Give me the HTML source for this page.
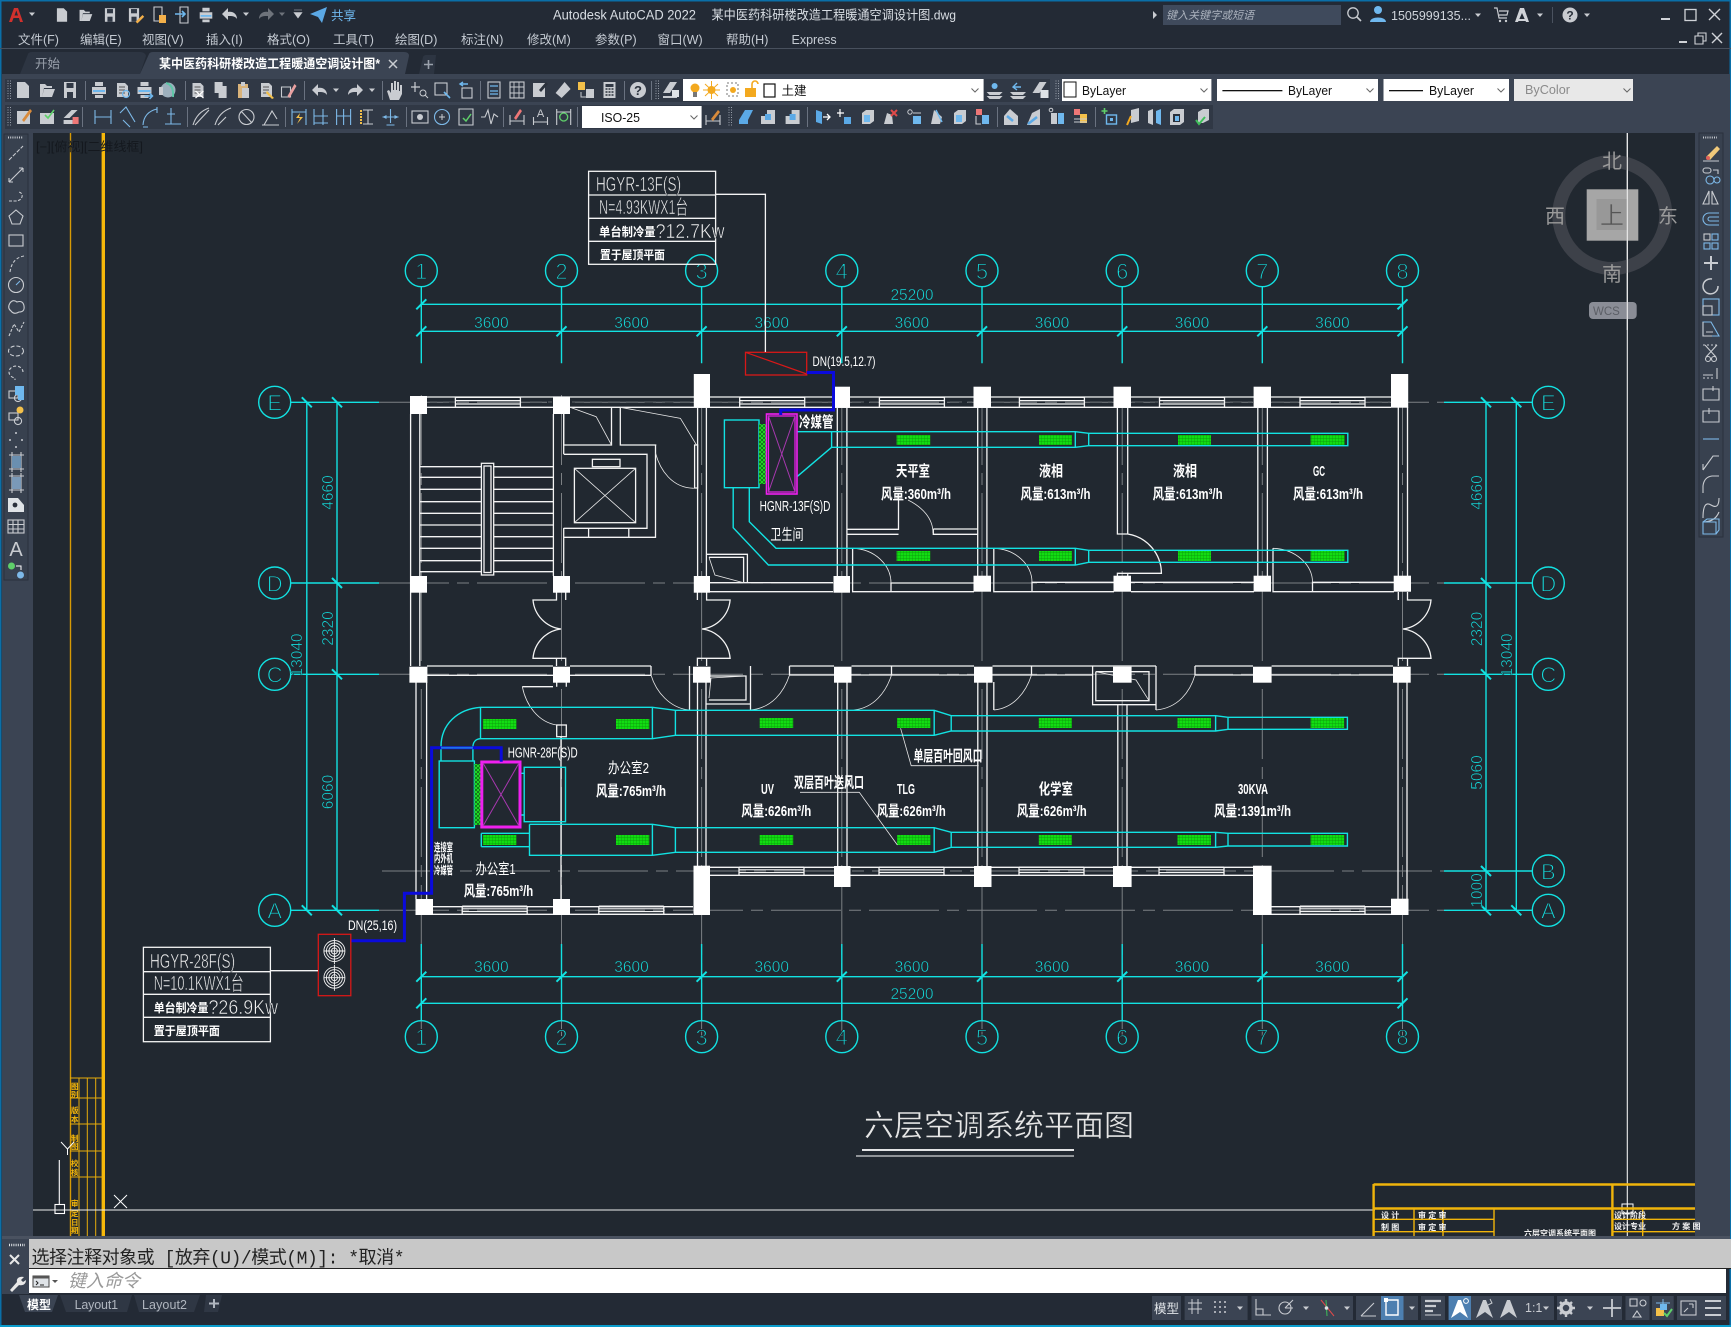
<!DOCTYPE html>
<html lang="zh"><head><meta charset="utf-8"><title>AutoCAD 2022</title>
<style>
html,body{margin:0;padding:0;background:#212830;width:1731px;height:1327px;overflow:hidden}
svg{display:block}
text{font-family:"Liberation Sans","Noto Sans CJK SC",sans-serif}
.cy{fill:none;stroke:#12e2e2;stroke-width:1.4}
.wh{fill:none;stroke:#f4f4f4;stroke-width:1.3}
.th{fill:none;stroke:#e8e8e8;stroke-width:.8}
.gr{fill:none;stroke:#7c8084;stroke-width:1}
.col{fill:#fff}
.dim{fill:#14dede;font-size:15.5px;text-anchor:middle;stroke:#212830;stroke-width:.45}
.bub{fill:#14dede;font-size:22px;text-anchor:middle;font-family:"DejaVu Sans",sans-serif;stroke:#212830;stroke-width:1}
.lab{fill:#fff;font-size:15px;font-weight:700;font-family:"Noto Serif CJK SC","Liberation Serif",serif}
.cad{fill:#f2f2f2;font-size:20px;stroke:#212830;stroke-width:.55}
.m{fill:#c5cbd3;font-size:12.5px}
.ic{fill:#c9ccd1}
.st{fill:none;stroke:#c9ccd1;stroke-width:1.1}
.sb{fill:none;stroke:#7db9e8;stroke-width:1.1}
.dk{fill:#303845}
</style></head><body>
<svg xmlns="http://www.w3.org/2000/svg" width="1731" height="1327" viewBox="0 0 1731 1327">
<defs>
<pattern id="gm" width="3" height="3" patternUnits="userSpaceOnUse"><rect width="3" height="3" fill="#12dc12"/><path d="M0 0H3M0 0V3" stroke="#0a8f0a" stroke-width=".7"/></pattern>
<pattern id="gh" width="4" height="4" patternUnits="userSpaceOnUse"><rect width="4" height="4" fill="#0b5a1a"/><path d="M0 0L4 4M4 0L0 4" stroke="#22e022" stroke-width="1"/></pattern>
<g id="win" class="wh"><path d="M0 0H65M0 3.3H65M0 6.7H65M0 10H65M0 0V10M65 0V10"/></g>
<g id="door2" class="wh"><path d="M-4.2 0V8M5 0V8H28.5A32 32 0 0 1 .5 37A32 32 0 0 1 28.5 66.3H-4.2V74M5 66.3V74"/></g>
<g id="fan" fill="none" stroke="#f2f2f2" stroke-width=".9"><circle r="10.5"/><circle r="8"/><circle r="5.5"/><circle r="3"/><path d="M0-13V13M-10.5 0H10.5"/></g>
<g id="tk"><path d="M-5 5L5-5" stroke="#12e2e2" stroke-width="2"/></g>
<g id="tb"><path d="M-5-5L5 5" stroke="#12e2e2" stroke-width="2"/></g>
<g id="new"><path class="ic" d="M-6-8H2L6-4V8H-6Z"/></g>
<g id="open"><path class="ic" d="M-7 7V-6H-2L0-4H5V-2H-3L-5 7ZM-3-1H8L5 7H-5Z"/></g>
<g id="save"><path class="ic" d="M-6-8H6V8H-6Z"/><rect class="dk" x="-3.5" y="-7" width="7" height="5"/><rect class="dk" x="-3" y="2" width="6" height="6"/></g>
<g id="print"><path class="ic" d="M-4-8H4V-4H-4ZM-7-3H7V4H-7ZM-4 5H4V8H-4Z"/><rect x="-6" y="0" width="12" height="2" fill="#6fb8ee"/></g>
<g id="undo"><path class="ic" d="M-8 0L-2-6V-2C3-3 7 0 7 5C5 2 2 2-2 2V6Z"/></g>
<g id="redo"><path class="ic" d="M8 0L2-6V-2C-3-3-7 0-7 5C-5 2-2 2 2 2V6Z"/></g>
<g id="dd"><path d="M-3-1.5H3L0 2Z" fill="#c9ccd1"/></g>
<g id="chev"><path d="M-3.5-1.5L0 2L3.5-1.5" fill="none" stroke="#666" stroke-width="1"/></g>
<g id="grip"><path d="M0-10V10M2.5-10V10" stroke="#9aa1ac" stroke-width="1" stroke-dasharray="1 1.5"/></g>
<g id="dimH"><path class="sb" d="M-8-7V7M8-7V7M-8 0H8"/></g>
<g id="doc"><path class="ic" d="M-5-7H3L6-4V7H-5Z"/><path d="M-3-3H3M-3 0H3M-3 3H3" stroke="#555" stroke-width="1"/></g>
<g id="solid"><path d="M-7 3L-1-7H7L2 3V7H-7Z" fill="#5ba9e6"/></g>
<g id="solid2"><path d="M-7-1H-1V-7H7V7H-7Z" fill="#c9ccd1"/><rect x="-3" y="-3" width="6" height="6" fill="#5ba9e6"/></g>
<g id="cube"><path d="M-6-4L-2-7H6V4L2 7H-6Z" fill="#c9ccd1"/><path d="M-4-2H2V5H-4Z" fill="#6fb8ee"/></g>
</defs>

<!-- chrome -->
<rect width="1731" height="1327" fill="#232a35"/>
<rect width="1731" height="1.5" fill="#0a6fa8"/>
<rect y="0" width="1.5" height="1327" fill="#0a6fa8"/>
<rect x="1729.5" y="0" width="1.5" height="1327" fill="#0a6fa8"/>
<rect y="1325" width="1731" height="2" fill="#0a9ccc"/>
<rect x="0" y="48" width="1731" height="1" fill="#48505d"/>
<rect x="2" y="74" width="1728" height="59" fill="#3b4453"/>
<rect x="2" y="133" width="31" height="1103" fill="#3b4453"/>
<rect x="1695" y="133" width="35" height="1103" fill="#3b4453"/>

<!-- title row -->
<path d="M9 22L14 8H18L23 22H20L19 18H13.5L12 22ZM14.5 15.5H18L16.3 10.5Z" fill="#d0312d"/>
<use href="#dd" x="32" y="14"/>
<g transform="translate(62 15) scale(.85)"><use href="#new"/></g>
<g transform="translate(85.5 15) scale(.85)"><use href="#open"/></g>
<g transform="translate(110 15) scale(.85)"><use href="#save"/></g>
<g transform="translate(134 15) scale(.85)"><use href="#save"/><path d="M2 8L10 0L12 2L4 10Z" fill="#f3b04a"/></g>
<g transform="translate(159 15)"><path class="st" d="M-5-8H3V6H-5Z"/><path d="M0 0H7V8H0Z" fill="#f3b04a"/></g>
<g transform="translate(183 15)"><path class="st" d="M-3-8H5V8H-3Z"/><path d="M-8-1H2M-1-4L2-1L-1 2" stroke="#6fb8ee" stroke-width="1.6" fill="none"/></g>
<g transform="translate(206 15) scale(.9)"><use href="#print"/></g>
<use href="#undo" x="230" y="14"/><use href="#dd" x="246" y="14"/>
<g opacity=".45"><use href="#redo" x="266" y="14"/><use href="#dd" x="282" y="14"/></g>
<path d="M294 10H302M294 12.5H302L298 18Z" fill="#c9ccd1" stroke="#c9ccd1" stroke-width=".6"/>
<path d="M310 14L327 7L322 23L318 17Z" fill="#5ba9e6"/>
<text x="331" y="20" style="fill:#6fb8ee;font-size:12.5px">共享</text>
<text x="553" y="19.5" textLength="143" lengthAdjust="spacingAndGlyphs" style="fill:#d9dee4;font-size:13.5px">Autodesk AutoCAD 2022</text>
<text x="711.5" y="19.5" textLength="244.5" lengthAdjust="spacingAndGlyphs" style="fill:#d9dee4;font-size:13px">某中医药科研楼改造工程暖通空调设计图.dwg</text>
<path d="M1153 11L1157 15L1153 19Z" fill="#c9ccd1"/>
<rect x="1163" y="5" width="178" height="20" fill="#3f4a5c"/>
<text x="1166" y="19" textLength="88" lengthAdjust="spacingAndGlyphs" style="fill:#aab1bc;font-size:11px;font-style:italic">键入关键字或短语</text>
<circle cx="1353" cy="13" r="5.2" fill="none" stroke="#c9ccd1" stroke-width="1.3"/><path d="M1357 17L1361 21" stroke="#c9ccd1" stroke-width="1.6"/>
<circle cx="1378" cy="10" r="4" fill="#6fb8ee"/><path d="M1370 22C1370 16 1386 16 1386 22Z" fill="#6fb8ee"/>
<text x="1391" y="20" textLength="80" lengthAdjust="spacingAndGlyphs" style="fill:#d0d5dc;font-size:13px">1505999135...</text>
<use href="#dd" x="1478" y="15"/>
<path d="M1494 8H1497L1499 18H1507M1499 11H1508L1507 15H1499" fill="none" stroke="#c9ccd1" stroke-width="1.2"/><circle cx="1500" cy="21" r="1.2" fill="#c9ccd1"/><circle cx="1506" cy="21" r="1.2" fill="#c9ccd1"/>
<path d="M1515 22L1520 8H1524L1529 22H1526L1522 13L1518 22Z M1516 19H1528V21H1516Z" fill="#d0d3d8"/>
<use href="#dd" x="1540" y="15"/>
<rect x="1552" y="7" width="1" height="16" fill="#4a525f"/>
<circle cx="1570" cy="15" r="7.5" fill="#c9ccd1"/><text x="1570" y="19.5" text-anchor="middle" style="fill:#2a313c;font-size:12px;font-weight:700">?</text>
<use href="#dd" x="1587" y="15"/>
<rect x="1661" y="18" width="9" height="2" fill="#d0d3d8"/>
<rect x="1685" y="9.5" width="11" height="11" fill="none" stroke="#d0d3d8" stroke-width="1.3"/>
<path d="M1709 9L1720 20M1720 9L1709 20" stroke="#d0d3d8" stroke-width="1.4"/>

<!-- menu -->
<text class="m" x="18" y="44">文件(F)</text><text class="m" x="80" y="44">编辑(E)</text><text class="m" x="142" y="44">视图(V)</text><text class="m" x="206" y="44">插入(I)</text><text class="m" x="267" y="44">格式(O)</text><text class="m" x="333" y="44">工具(T)</text><text class="m" x="395" y="44">绘图(D)</text><text class="m" x="461" y="44">标注(N)</text><text class="m" x="527" y="44">修改(M)</text><text class="m" x="595" y="44">参数(P)</text><text class="m" x="657.5" y="44">窗口(W)</text><text class="m" x="726" y="44">帮助(H)</text><text class="m" x="791.5" y="44">Express</text>
<rect x="1679" y="41" width="8" height="2" fill="#d0d3d8"/>
<path d="M1695 36H1703V44H1695ZM1698 36V33H1706V41H1703" fill="none" stroke="#d0d3d8" stroke-width="1.1"/>
<path d="M1712 33L1722 43M1722 33L1712 43" stroke="#d0d3d8" stroke-width="1.4"/>

<!-- tabs -->
<path d="M20 74L28 54Q29 52 32 52H140Q145 52 146 56L140 74Z" fill="#2d3542"/>
<text x="35" y="68" style="fill:#9aa1ac;font-size:12.5px">开始</text>
<path d="M140 74L149 54Q150 52 153 52H404Q409 52 409 56L405 74Z" fill="#3b4453"/>
<text x="159" y="68" textLength="221" lengthAdjust="spacingAndGlyphs" style="fill:#fff;font-size:12.5px;font-weight:700">某中医药科研楼改造工程暖通空调设计图*</text>
<path d="M389 60L397 68M397 60L389 68" stroke="#c9ccd1" stroke-width="1.5"/>
<path d="M419 74L423 57Q424 55 426 55H436L434 74Z" fill="#2d3542"/>
<path d="M424 64.5H433M428.5 60V69" stroke="#9aa1ac" stroke-width="1.6"/>

<!-- toolbars bg -->
<rect x="5" y="79" width="1045" height="23" fill="#303845"/>
<rect x="5" y="105" width="1208" height="24" fill="#303845"/>
<use href="#grip" x="8" y="90.5"/><use href="#grip" x="8" y="117"/>
<!-- row 1 -->
<use href="#new" x="23" y="90"/><use href="#open" x="47" y="90"/><use href="#save" x="70" y="90"/>
<rect x="85" y="81" width="1" height="19" fill="#6a7280"/>
<use href="#print" x="99" y="90"/>
<g transform="translate(122 90)"><use href="#doc"/><circle cx="4" cy="4" r="3.5" fill="none" stroke="#6fb8ee" stroke-width="1.2"/></g>
<g transform="translate(144.5 90)"><use href="#print"/><path d="M0 6H8M5 3L8 6L5 9" stroke="#6fb8ee" stroke-width="1.5" fill="none"/></g>
<g transform="translate(168 90)"><circle r="7.5" fill="#9db0bd"/><path d="M-2-7Q6-5 5 7" stroke="#5fc7a8" stroke-width="2" fill="none"/><rect x="-9" y="-3" width="4" height="8" fill="#c9ccd1"/></g>
<rect x="185" y="81" width="1" height="19" fill="#6a7280"/>
<g transform="translate(197.5 90)"><use href="#doc"/><path d="M-2 1L6 8M6 1L-2 8" stroke="#fff" stroke-width="1.2"/></g>
<g transform="translate(220.6 90)"><path class="ic" d="M-6-8H2V3H-6ZM-2-4H6V8H-2Z"/></g>
<g transform="translate(243 90)"><path d="M-5-6H5V8H-5Z" fill="#d9b37a"/><rect x="-2" y="-8" width="4" height="4" fill="#c9ccd1"/><path class="ic" d="M-1-2H6V8H-1Z"/></g>
<g transform="translate(266 90)"><use href="#doc"/><path d="M1 1L8 8L6 9L0 3Z" fill="#f3c04a"/></g>
<g transform="translate(288.5 90)"><path class="st" d="M-7-3H2V7H-7Z"/><path d="M-1 6L6-6L8-4L1 8Z" fill="#e9a0a0"/></g>
<rect x="304" y="81" width="1" height="19" fill="#6a7280"/>
<use href="#undo" x="320" y="90"/><use href="#dd" x="336" y="90"/><use href="#redo" x="355" y="90"/><use href="#dd" x="372" y="90"/>
<rect x="382" y="81" width="1" height="19" fill="#6a7280"/>
<path class="ic" d="M390 100L387 91L389 90L391 93V83H393V90H394V81H396V90H397V82H399V91H400V85H402V94L399 100Z"/>
<g transform="translate(419 90)"><path d="M-4-8V2M-8-3H1" stroke="#c9ccd1" stroke-width="1.2"/><circle cx="4" cy="3" r="3" fill="none" stroke="#c9ccd1"/><path d="M6 5L9 8" stroke="#c9ccd1"/></g>
<g transform="translate(442 90)"><rect class="st" x="-7" y="-7" width="12" height="12"/><path d="M2 2L8 8" stroke="#6fb8ee" stroke-width="1.6"/></g>
<g transform="translate(466 90)"><rect class="st" x="-4" y="-2" width="10" height="10"/><path d="M-6-6H2M-3-8L-6-6L-3-4" stroke="#6fb8ee" stroke-width="1.4" fill="none"/></g>
<rect x="480" y="81" width="1" height="19" fill="#6a7280"/>
<g transform="translate(494 90)"><rect class="st" x="-6" y="-8" width="12" height="16"/><path d="M-4-4H4M-4 1H4M-4 4H4" stroke="#6fb8ee" stroke-width="1.3"/></g>
<g transform="translate(517 90)"><rect class="st" x="-7" y="-8" width="14" height="16"/><path d="M-3-8V8M2-8V8M-7-3H7M-7 3H7" stroke="#c9ccd1" stroke-width=".9"/></g>
<g transform="translate(540 90)"><path class="ic" d="M-7-7H5V7H-7Z"/><path d="M-1 0L6-8L8-6L1 2Z" fill="#2a313c"/></g>
<g transform="translate(562.6 90)"><path class="ic" d="M-7 3L2-8L8-1L-1 8Z"/></g>
<g transform="translate(586 90)"><rect x="-8" y="-8" width="7" height="8" fill="#f3c04a"/><path class="ic" d="M0-1H8V8H0Z"/><path d="M-5 2V7H0" stroke="#c9ccd1" fill="none"/></g>
<g transform="translate(609.5 90)"><rect class="ic" x="-6" y="-8" width="12" height="16"/><rect class="dk" x="-4" y="-6" width="8" height="3"/><path d="M-4-1H4M-4 2H4M-4 5H4" stroke="#2a313c" stroke-width="1.4" stroke-dasharray="2 1"/></g>
<rect x="624" y="81" width="1" height="19" fill="#6a7280"/>
<circle cx="638" cy="90" r="8" fill="#c9ccd1"/><text x="638" y="95" text-anchor="middle" style="fill:#2a313c;font-size:13px;font-weight:700">?</text>
<rect x="651" y="81" width="1" height="19" fill="#6a7280"/><use href="#grip" x="656" y="90.5"/>
<g transform="translate(671 90)"><path class="ic" d="M-8 3L-1-8H6L-1 3ZM-8 6H6V8H-8Z"/><rect x="1" y="0" width="7" height="7" fill="#dfe3e7"/></g>
<rect x="683" y="79" width="300.6" height="22" fill="#fff"/>
<circle cx="695" cy="88" r="4.5" fill="#f3a91f"/><rect x="693" y="92" width="4" height="5" fill="#777"/>
<circle cx="711.5" cy="90" r="4" fill="#f3a91f"/><path d="M711.5 81V99M703 90H720M705 84L718 96M718 84L705 96" stroke="#f3a91f" stroke-width="1"/>
<rect x="727" y="83" width="11" height="13" fill="none" stroke="#777" stroke-dasharray="2 2"/><circle cx="733" cy="90" r="3" fill="#f3a91f"/>
<rect x="745" y="88" width="11" height="9" fill="#f3a91f"/><path d="M752 88V84A3 3 0 0 1 758 84" fill="none" stroke="#f3a91f" stroke-width="1.6"/>
<rect x="764" y="84" width="11" height="13" fill="#fff" stroke="#111" stroke-width="1.2"/>
<text x="781.5" y="95" style="fill:#111;font-size:12.5px">土建</text>
<use href="#chev" x="975" y="90"/>
<g transform="translate(994.6 90)"><circle cy="-4" r="3" fill="#6fb8ee"/><path d="M-8 2H8L5 5H-5ZM-8 6H8L5 9H-5Z" fill="#c9ccd1"/></g>
<g transform="translate(1018 90)"><path d="M-8 2H8L5 5H-5ZM-8 6H8L5 9H-5Z" fill="#c9ccd1"/><path d="M-4-3H3M-1-7L-5-3L-1 0" stroke="#6fb8ee" stroke-width="1.4" fill="none"/></g>
<g transform="translate(1040.5 90)"><path class="ic" d="M-8 3L-1-8H6L-1 3Z"/><rect x="0" y="0" width="8" height="8" fill="#dfe3e7"/></g>
<use href="#grip" x="1056" y="90.5"/>
<rect x="1062" y="79" width="149.4" height="22" fill="#fff"/><rect x="1064" y="82" width="12" height="15" fill="#fff" stroke="#111"/>
<text x="1082" y="95" textLength="44" lengthAdjust="spacingAndGlyphs" style="fill:#111;font-size:12.5px">ByLayer</text><use href="#chev" x="1204" y="90"/>
<rect x="1217" y="79" width="161" height="22" fill="#fff"/><rect x="1222.4" y="90" width="60" height="1.3" fill="#111"/>
<text x="1288" y="95" textLength="44" lengthAdjust="spacingAndGlyphs" style="fill:#111;font-size:12.5px">ByLayer</text><use href="#chev" x="1370" y="90"/>
<rect x="1383.5" y="79" width="125.5" height="22" fill="#fff"/><rect x="1389" y="90" width="34" height="1.3" fill="#111"/>
<text x="1429" y="95" textLength="45" lengthAdjust="spacingAndGlyphs" style="fill:#111;font-size:12.5px">ByLayer</text><use href="#chev" x="1501" y="90"/>
<rect x="1514" y="79" width="119" height="22" fill="#e8e8e8"/>
<text x="1525" y="94" textLength="45" lengthAdjust="spacingAndGlyphs" style="fill:#8a8a8a;font-size:12.5px">ByColor</text><use href="#chev" x="1627" y="90"/>
<!-- row 2 -->
<g transform="translate(24 117)"><path class="ic" d="M-7-6H6V7H-7Z"/><path d="M-2 3L6-8L8-6L0 5Z" fill="#d98a3a"/></g>
<g transform="translate(47 117)"><path class="ic" d="M-7-4H7V7H-7Z"/><path d="M-2-2L1 1L7-7" stroke="#5fd06a" stroke-width="1.6" fill="none"/></g>
<g transform="translate(70.6 117)"><path class="ic" d="M-7 1L1-7H7L-1 1Z"/><path d="M-7 3H2V7H-7Z" fill="#c9ccd1"/><rect x="2" y="0" width="6" height="7" fill="#e77"/></g>
<rect x="82" y="107" width="1" height="20" fill="#6a7280"/>
<use href="#dimH" x="103" y="117"/>
<path class="sb" d="M120 113L126 107L135 122M123 120L130 127"/>
<path class="sb" d="M143 125Q144 112 157 109M143 127H148M157 107V113"/>
<path class="sb" d="M165 124H181M171 124V108M167 114H175"/>
<rect x="187" y="107" width="1" height="20" fill="#6a7280"/>
<path class="st" d="M193 125Q197 112 209 108M195 125L209 110"/>
<path class="st" d="M215 125Q219 112 231 108M218 125L226 117"/>
<circle class="st" cx="246.5" cy="117" r="7.5"/><path class="st" d="M241 111L252 123"/>
<path class="st" d="M262 125H279M264 125L272 111L277 119"/>
<rect x="285" y="107" width="1" height="20" fill="#6a7280"/>
<g transform="translate(299 117)"><path class="sb" d="M-7-8V8M7-8V8M-7-5H7"/><path d="M1-4L-3 1H1L-2 7L4 0H0Z" fill="#f3c04a"/></g>
<g transform="translate(321 117)"><path class="sb" d="M-7-8V8M-7-1H7M-7 6H7M2-8V8"/></g>
<g transform="translate(343.6 117)"><path class="sb" d="M-7-8V8M0-8V8M7-8V8M-7-1H7"/></g>
<g transform="translate(368 117)"><path class="st" d="M-5-7H5M-5 7H5M0-7V7"/><path d="M-7-7V7" stroke="#f3c04a" stroke-width="2" stroke-dasharray="2 1"/></g>
<g transform="translate(390.5 117)"><path class="sb" d="M-8 0H8M0-8V6M-4 8H4"/><path d="M-8 0L-4-2V2Z M8 0L4-2V2Z" fill="#7db9e8"/></g>
<rect x="406" y="107" width="1" height="20" fill="#6a7280"/>
<g transform="translate(420 117)"><rect class="st" x="-8" y="-6" width="16" height="12"/><circle r="3" fill="#c9ccd1"/></g>
<g transform="translate(442 117)"><circle class="sb" r="7.5"/><path d="M-3 0H3M0-3V3" stroke="#c9ccd1"/></g>
<g transform="translate(466 117)"><path class="st" d="M-7-8H7V8H-7Z"/><path d="M-3 1L0 4L5-3" stroke="#5fd06a" stroke-width="1.5" fill="none"/></g>
<path class="st" d="M481 117H485L488 110L491 124L494 114L498 117"/>
<rect x="503" y="107" width="1" height="20" fill="#6a7280"/>
<g transform="translate(517 117)"><path class="st" d="M-7-2V8M7-2V8M-7 4H7"/><path d="M-3 1L3-8L5-6L-1 3Z" fill="#e77"/></g>
<g transform="translate(540.5 117)"><path class="st" d="M-7 8V0M7 8V0M-7 5H7"/><text y="0" text-anchor="middle" style="fill:#c9ccd1;font-size:11px">A</text></g>
<g transform="translate(563.7 117)"><path class="st" d="M-7-8V8M7-8V8M-7-5H7"/><circle r="4" fill="none" stroke="#5fd06a" stroke-width="1.3"/></g>
<rect x="577" y="107" width="1" height="20" fill="#6a7280"/>
<rect x="582" y="106" width="119.6" height="22" fill="#fff"/>
<text x="601" y="122" textLength="39" lengthAdjust="spacingAndGlyphs" style="fill:#111;font-size:13px">ISO-25</text><use href="#chev" x="694" y="117"/>
<g transform="translate(713 117)"><path class="st" d="M-7-2V8M7-2V8M-7 4H7"/><path d="M-2 2L5-7L7-5L0 4Z" fill="#d98a3a"/></g>
<use href="#grip" x="729" y="117"/>
<use href="#solid" x="746" y="117"/><use href="#solid2" x="768" y="117"/><use href="#solid2" x="792.6" y="117"/>
<rect x="807" y="107" width="1" height="20" fill="#6a7280"/>
<g transform="translate(822 117)"><path d="M-6-7L0-5V7L-6 5Z" fill="#5ba9e6"/><path d="M1 0H8M5-3L8 0L5 3" stroke="#fff" stroke-width="1.3" fill="none"/></g>
<g transform="translate(844 117)"><path d="M-7-4H0M-4-8V0" stroke="#fff" stroke-width="1.2"/><rect x="0" y="0" width="7" height="7" fill="#5ba9e6"/></g>
<use href="#cube" x="868" y="117"/>
<g transform="translate(890 117)"><path class="ic" d="M-6 7L-3-4L2-2L3 7Z"/><path d="M1-7L7-1M7-7L1-1" stroke="#e04a4a" stroke-width="2"/></g>
<g transform="translate(915 117)"><circle cx="-5" cy="-5" r="2.2" fill="none" stroke="#c9ccd1"/><rect x="-2" y="-1" width="8" height="8" fill="#6fb8ee"/><path d="M-2-4H6" stroke="#c9ccd1"/></g>
<g transform="translate(937 117)"><path class="ic" d="M-6 7L-3-7L5 0L3 7Z"/><path d="M-1-7L5 5" stroke="#6fb8ee" stroke-width="1.5"/></g>
<use href="#cube" x="960" y="117"/>
<g transform="translate(982 117)"><rect x="-6" y="-8" width="6" height="6" fill="#e77"/><rect x="0" y="-2" width="7" height="9" fill="#6fb8ee"/><path class="st" d="M-6-1V7H-1"/></g>
<rect x="997" y="107" width="1" height="20" fill="#6a7280"/>
<g transform="translate(1011 117)"><path class="ic" d="M-7 8V-1L-1-8L7-1V8Z"/><path d="M-4-1L2 4" stroke="#5ba9e6" stroke-width="2.5"/></g>
<g transform="translate(1034 117)"><path class="ic" d="M-7 8L-2-4L6-8V8Z"/><path d="M-6 7L3 0" stroke="#5ba9e6" stroke-width="2.5"/></g>
<g transform="translate(1057 117)"><rect class="ic" x="-6" y="-4" width="6" height="11"/><rect x="1" y="-4" width="6" height="11" fill="#6fb8ee"/><circle cx="-6" cy="-7" r="1.8" fill="none" stroke="#c9ccd1"/></g>
<g transform="translate(1080 117)"><rect x="-6" y="-8" width="6" height="6" fill="#e77"/><rect x="0" y="-3" width="7" height="9" fill="#f3c04a"/><path d="M-6 2H7M-6 5H7" stroke="#c9ccd1"/></g>
<rect x="1095" y="107" width="1" height="20" fill="#6a7280"/>
<g transform="translate(1109.5 117)"><path d="M-8-6H-2M-5-9V-3" stroke="#5fd06a" stroke-width="1.6"/><rect x="-3" y="-2" width="10" height="9" fill="none" stroke="#6fb8ee" stroke-width="1.4"/><rect x=".5" y="1" width="3" height="3" fill="#6fb8ee"/></g>
<g transform="translate(1133 117)"><path class="ic" d="M-2-7L6-9V4L-2 6Z"/><path d="M-6 8L-2-1" stroke="#f3a91f" stroke-width="2"/></g>
<g transform="translate(1155 117)"><path class="ic" d="M-7-6L-2-8V8L-7 6Z"/><path d="M1-6L6-8V8L1 6Z" fill="#6fb8ee"/></g>
<g transform="translate(1177 117)"><path class="ic" d="M-7-5L-3-8H7V5L3 8H-7Z"/><rect x="-4" y="-3" width="7" height="8" fill="#2a313c"/><rect x="-2" y="-1" width="4" height="5" fill="#6fb8ee"/></g>
<g transform="translate(1202 117)"><path class="ic" d="M-4-5L1-8H7V3L1 6H-4Z"/><path d="M-6 3L-3 7L3 0" stroke="#3fbf5a" stroke-width="2" fill="none"/></g>

<!-- canvas -->
<rect x="33" y="133" width="1662" height="1103" fill="#212830"/>

<!-- yellow left border -->
<path d="M70.5 133V1236" stroke="#d69a05" stroke-width="1.4"/>
<path d="M103.3 133V1236" stroke="#f6b80a" stroke-width="3.4"/>
<path d="M70 1078H103M70 1098H103M70 1124H103M70 1151H103M70 1177H103M70 1210H103M79 1078V1236M87.3 1078V1236M95.7 1078V1236" stroke="#e8ac0a" stroke-width="1"/>
<g style="fill:#f6b80a;font-size:7.5px;font-weight:700" font-family="Noto Sans CJK SC">
<text x="71" y="1089">图</text><text x="71" y="1097">别</text><text x="71" y="1113">版</text><text x="71" y="1122">本</text><text x="71" y="1141">制</text><text x="71" y="1149">图</text><text x="71" y="1166">校</text><text x="71" y="1175">核</text><text x="71" y="1206">审</text><text x="71" y="1216">定</text><text x="71" y="1225">日</text><text x="71" y="1233">期</text></g>
<text x="36" y="151" textLength="107" lengthAdjust="spacingAndGlyphs" style="fill:#14181e;font-size:12.5px">[−][俯视][二维线框]</text>

<!-- gray axis lines -->
<g class="gr">
<path stroke-dasharray="70 8 12 8" d="M421.3 395V1036M561.5 395V1036M701.6 395V1036M841.8 395V1036M982 395V1036M1122.2 395V1036M1262.3 395V1036M1402.5 395V1036"/>
<path stroke-dasharray="70 8 12 8" d="M379 402.3H1444M379 583H1444M379 674.3H1444M382 871H1444M379 910.3H1444"/>
</g>

<!-- crosshair + UCS -->
<path d="M1627.3 133V1236M33 1210H1375" stroke="#f0f0f0" stroke-width="1.1" fill="none"/>
<rect x="1622" y="1204" width="11" height="9" fill="none" stroke="#fff"/>
<path d="M59.3 1160V1204" stroke="#fff" stroke-width="1.1"/><rect x="55" y="1204.5" width="9.5" height="9" fill="none" stroke="#fff" stroke-width="1.1"/>
<path d="M61 1142L67.5 1149L74 1142M67.5 1149V1155M114 1195L127 1208M127 1195L114 1208" stroke="#fff" stroke-width="1" fill="none"/>

<!-- WALLS -->
<g class="wh">
<path d="M410 397H1391M427 407.3H1391"/>
<path d="M410.6 414V666M419.8 414V666M553.4 414V576M563.7 414V454M563.7 528V576M697.6 407V576M706.4 407V576M837.3 407V576M846.9 407V576M977.7 407V576M986.9 407V576M1117.4 407V534H1127.7A40 40 0 0 1 1161.4 573.3H1117.4V576M1127.7 407V534M1127.7 573V576M1257.8 407V576M1267.4 407V576M1398.3 407V576M1407.5 407V576"/>
<!-- stair room -->
<path d="M419.8 466.7H553M419.8 477.3H553M419.8 489.3H553M419.8 501.7H553M419.8 513.3H553M419.8 525H553M419.8 536.7H553M419.8 548.3H553M419.8 560.7H553M419.8 571.7H553"/>
<rect x="481.4" y="463.3" width="12.3" height="111.7" fill="#212830"/><rect x="484" y="466" width="7" height="106.5"/>
<!-- small rooms -->
<path d="M563.7 407V445H611.5V407.3M620.3 407.3V445H656.3M655.5 445V537.3H563.7M563.7 454.3H647V528.3H563.7M588.6 528V537.3M628.8 528V537.3"/>
<rect x="592.4" y="459.3" width="27.6" height="7.4"/><rect x="574.4" y="468.3" width="61.2" height="54.4"/>
<path class="th" d="M574.4 468.3L635.6 522.7M635.6 468.3L574.4 522.7M570 407.3L596.2 416.7L611.5 445M620.3 407.3L680.4 418.3L696.5 445M655.5 453C660 470 672 488 693.8 488.3"/>
<path d="M694.6 445H697.6V488H694.6Z"/>
<!-- D row -->
<path d="M706.4 582.7H833M706.4 591.7H833M852.6 548.3V591.7H891V583H974M891 591.7H974M993.8 548.3V591.7H1032V582.3H1114M1032 591.7H1114M1131 582.3H1254M1131 591.7H1254M1273 548.3V591.7H1312.5V582.3H1394M1312.5 591.7H1394"/>
<path class="th" d="M852.6 548.3C875 549 891 565 891 583M993.8 548.3C1016 549 1032 565 1032 582.3M1273 548.3C1296 549 1312.5 565 1312.5 582.3M908 500C922 507 933 518 933 533"/>
<path d="M706.4 554.3H747.4V582.7M709 557.3H743.6V582.7"/>
<path class="th" d="M709 557.3L714.9 575L743.6 582.7"/>
<path d="M846.9 529.3H898.5V500M846.9 534.3H898.5M933.3 529V534.3H977.7M933.3 529H977.7"/>
<!-- C row -->
<path d="M427 666H553M419 675.3H553M570 666H651M570 675.3H651M651 666V675M689.5 666V710M750.5 666V710M709 676H746V700H709M706 704H750.5M789.5 666V675M789.5 666H834M789.5 675H834M851.5 666H891.5M851.5 675H891.5M891.5 666V675M891.5 666H974M891.5 675H974M992.5 666H1031.5M992.5 675H1031.5M1031.5 666V675M1031.5 666H1092.6M1031.5 675H1092.6M1092.6 666V704.7H1156M1156 666V710M1092.6 666H1156M1095.8 671.7H1149V700.7H1095.8V671.7M1195 666V675M1195 666H1253M1195 675H1253M1271.6 666H1393M1271.6 675H1393"/>
<path class="th" d="M651 675C656 692 670 708 689 710M789.5 675C784 692 772 708 750.5 710M891.5 675C886 692 874 708 853.8 710M1031.5 675C1026 692 1014 708 993.8 710M1195 675C1190 692 1178 708 1156 710M1095.8 671.7L1136 680L1149 700.7M711 678L709 698M711 678L746 676"/>
<path d="M993.8 682V710"/>
<!-- lower verticals -->
<path d="M416 682V899M426.6 682V899M561 737V899M697.5 682V866M706 682V866M837.7 682V866M847 682V866M977.8 682V866M987 682V866M1117.8 704.7V866M1127 704.7V866M1398 682V899M1407 682V899"/>
<path d="M522.3 686.7H553M556.7 675V686.7M566.3 675V686.7"/>
<path class="th" d="M522.3 686.7C526 705 538 722 556.7 725"/>
<rect x="556.7" y="725" width="9.6" height="11.7"/>
<!-- bottom walls -->
<path d="M433 906.7H553M433 914.3H553M570 906.7H693M570 914.3H693M710 867.3H1254M710 875.3H1254M1271 906.7H1393M1271 914.3H1393"/>
</g>
<use href="#door2" x="701.6" y="592"/>
<use href="#door2" transform="translate(561.5 592) scale(-1 1)"/>
<use href="#door2" x="1402.5" y="592"/>
<!-- dashes in wall -->
<path d="M455 402H430M530 402H552M572 402H690M710 402H738M810 402H832M852 402H878M950 402H972M992 402H1018M1090 402H1112M1132 402H1158M1230 402H1252M1272 402H1298M1370 402H1390" stroke="#5e6368" stroke-width="1" stroke-dasharray="12 6" fill="none"/>
<!-- windows -->
<g>
<use href="#win" x="455.4" y="397.3"/><use href="#win" x="739.7" y="397.3"/><use href="#win" x="879.4" y="397.3"/><use href="#win" x="1019.4" y="397.3"/><use href="#win" x="1159.5" y="397.3"/><use href="#win" x="1300" y="397.3"/>
<use href="#win" transform="translate(462.2 906) scale(1 .83)"/><use href="#win" transform="translate(598.8 906) scale(1 .83)"/><use href="#win" transform="translate(739 867) scale(1 .83)"/><use href="#win" transform="translate(879 867) scale(1 .83)"/><use href="#win" transform="translate(1019 867) scale(1 .83)"/><use href="#win" transform="translate(1159 867) scale(1 .83)"/><use href="#win" transform="translate(1300 906) scale(1 .83)"/>
</g>
<!-- columns -->
<g class="col">
<rect x="410" y="396" width="17" height="18"/><rect x="553" y="396.5" width="17" height="17.5"/><rect x="693.8" y="374" width="16.2" height="33"/><rect x="833.5" y="386.7" width="16.5" height="20.6"/><rect x="973.5" y="386.7" width="17.5" height="21"/><rect x="1113.5" y="386.7" width="17.5" height="21"/><rect x="1253.6" y="386.7" width="17.4" height="21"/><rect x="1391" y="374" width="17.2" height="33.7"/>
<rect x="410" y="576" width="17" height="16.7"/><rect x="553" y="576" width="17" height="16.7"/><rect x="693.8" y="576" width="16.2" height="16.7"/><rect x="833.5" y="576" width="16.5" height="16.7"/><rect x="973.5" y="575.7" width="17.5" height="16"/><rect x="1113.5" y="575.7" width="17.5" height="16"/><rect x="1253.6" y="575.7" width="17.4" height="16"/><rect x="1393.7" y="575.7" width="17.3" height="16"/>
<rect x="409.4" y="666.7" width="18" height="16"/><rect x="553" y="666.7" width="17" height="16"/><rect x="693" y="666.7" width="17.5" height="16"/><rect x="834" y="666.7" width="17.5" height="16"/><rect x="974" y="666.7" width="18.5" height="16"/><rect x="1113" y="666.7" width="18.6" height="16"/><rect x="1253" y="666.7" width="18.6" height="16"/><rect x="1393" y="666.7" width="17.7" height="16"/>
<rect x="415.5" y="899" width="17.5" height="16"/><rect x="553" y="899" width="17" height="16"/><rect x="693.5" y="865.7" width="16.5" height="49.3"/><rect x="834" y="866" width="16.5" height="21"/><rect x="974" y="866" width="17.5" height="21"/><rect x="1113" y="866" width="18.6" height="21"/><rect x="1253" y="865.7" width="18.6" height="49.3"/><rect x="1391" y="898.7" width="17.5" height="16.3"/>
</g>

<!-- DIMENSIONS -->
<g class="cy">
<path d="M421.3 287V363.3M561.5 287V363.3M701.6 287V363.3M841.8 287V363.3M982 287V363.3M1122.2 287V363.3M1262.3 287V363.3M1402.5 287V363.3"/>
<path d="M421.3 304.3H1402.5M421.3 331.3H1402.5"/>
<path d="M421.3 944V1020M561.5 944V1020M701.6 944V1020M841.8 944V1020M982 944V1020M1122.2 944V1020M1262.3 944V1020M1402.5 944V1020"/>
<path d="M421.3 976.7H1402.5M421.3 1003.3H1402.5"/>
<path d="M290 402.3H379M290 583H379M290 674.3H379M290 910.3H379M306.8 402.3V910.3M337 402.3V910.3"/>
<path d="M1444 402.3H1532M1444 583H1532M1444 674.3H1532M1444 871H1532M1444 910.3H1532M1486 402.3V910.3M1516.3 402.3V910.3"/>
<circle cx="421.3" cy="270.7" r="16"/><circle cx="561.5" cy="270.7" r="16"/><circle cx="701.6" cy="270.7" r="16"/><circle cx="841.8" cy="270.7" r="16"/><circle cx="982" cy="270.7" r="16"/><circle cx="1122.2" cy="270.7" r="16"/><circle cx="1262.3" cy="270.7" r="16"/><circle cx="1402.5" cy="270.7" r="16"/>
<circle cx="421.3" cy="1036.7" r="16"/><circle cx="561.5" cy="1036.7" r="16"/><circle cx="701.6" cy="1036.7" r="16"/><circle cx="841.8" cy="1036.7" r="16"/><circle cx="982" cy="1036.7" r="16"/><circle cx="1122.2" cy="1036.7" r="16"/><circle cx="1262.3" cy="1036.7" r="16"/><circle cx="1402.5" cy="1036.7" r="16"/>
<circle cx="274.7" cy="402.3" r="16"/><circle cx="274.7" cy="583" r="16"/><circle cx="274.7" cy="674.3" r="16"/><circle cx="274.7" cy="910.3" r="16"/>
<circle cx="1548.3" cy="402.3" r="16"/><circle cx="1548.3" cy="583" r="16"/><circle cx="1548.3" cy="674.3" r="16"/><circle cx="1548.3" cy="871" r="16"/><circle cx="1548.3" cy="910.3" r="16"/>
</g>
<g>
<use href="#tk" x="421.3" y="304.3"/><use href="#tk" x="1402.5" y="304.3"/>
<use href="#tk" x="421.3" y="331.3"/><use href="#tk" x="561.5" y="331.3"/><use href="#tk" x="701.6" y="331.3"/><use href="#tk" x="841.8" y="331.3"/><use href="#tk" x="982" y="331.3"/><use href="#tk" x="1122.2" y="331.3"/><use href="#tk" x="1262.3" y="331.3"/><use href="#tk" x="1402.5" y="331.3"/>
<use href="#tk" x="421.3" y="976.7"/><use href="#tk" x="561.5" y="976.7"/><use href="#tk" x="701.6" y="976.7"/><use href="#tk" x="841.8" y="976.7"/><use href="#tk" x="982" y="976.7"/><use href="#tk" x="1122.2" y="976.7"/><use href="#tk" x="1262.3" y="976.7"/><use href="#tk" x="1402.5" y="976.7"/>
<use href="#tk" x="421.3" y="1003.3"/><use href="#tk" x="1402.5" y="1003.3"/>
<use href="#tb" x="306.8" y="402.3"/><use href="#tb" x="337" y="402.3"/><use href="#tb" x="337" y="583"/><use href="#tb" x="337" y="674.3"/><use href="#tb" x="337" y="910.3"/><use href="#tb" x="306.8" y="910.3"/>
<use href="#tb" x="1486" y="402.3"/><use href="#tb" x="1486" y="583"/><use href="#tb" x="1486" y="674.3"/><use href="#tb" x="1486" y="871"/><use href="#tb" x="1486" y="910.3"/><use href="#tb" x="1516.3" y="402.3"/><use href="#tb" x="1516.3" y="910.3"/>
</g>
<g class="bub">
<text x="421.3" y="279">1</text><text x="561.5" y="279">2</text><text x="701.6" y="279">3</text><text x="841.8" y="279">4</text><text x="982" y="279">5</text><text x="1122.2" y="279">6</text><text x="1262.3" y="279">7</text><text x="1402.5" y="279">8</text>
<text x="421.3" y="1045">1</text><text x="561.5" y="1045">2</text><text x="701.6" y="1045">3</text><text x="841.8" y="1045">4</text><text x="982" y="1045">5</text><text x="1122.2" y="1045">6</text><text x="1262.3" y="1045">7</text><text x="1402.5" y="1045">8</text>
<text x="274.7" y="410.6">E</text><text x="274.7" y="591.3">D</text><text x="274.7" y="682.6">C</text><text x="274.7" y="918.6">A</text>
<text x="1548.3" y="410.6">E</text><text x="1548.3" y="591.3">D</text><text x="1548.3" y="682.6">C</text><text x="1548.3" y="879.3">B</text><text x="1548.3" y="918.6">A</text>
</g>
<g class="dim">
<text x="912" y="300">25200</text><text x="912" y="999">25200</text>
<text x="491.4" y="328">3600</text><text x="631.5" y="328">3600</text><text x="771.7" y="328">3600</text><text x="911.9" y="328">3600</text><text x="1052" y="328">3600</text><text x="1192" y="328">3600</text><text x="1332.4" y="328">3600</text>
<text x="491.4" y="972">3600</text><text x="631.5" y="972">3600</text><text x="771.7" y="972">3600</text><text x="911.9" y="972">3600</text><text x="1052" y="972">3600</text><text x="1192" y="972">3600</text><text x="1332.4" y="972">3600</text>
<text transform="translate(333 492.5) rotate(-90)">4660</text><text transform="translate(333 628.5) rotate(-90)">2320</text><text transform="translate(333 792) rotate(-90)">6060</text><text transform="translate(302 655) rotate(-90)">13040</text>
<text transform="translate(1482 492.5) rotate(-90)">4660</text><text transform="translate(1482 629) rotate(-90)">2320</text><text transform="translate(1482 772.5) rotate(-90)">5060</text><text transform="translate(1482 890.5) rotate(-90)">1000</text><text transform="translate(1512 655) rotate(-90)">13040</text>
</g>

<!-- DUCTS upper -->
<g class="cy">
<rect x="724.4" y="420" width="34.6" height="67.7"/>
<path d="M733.2 487.7V527.7L768.4 565H1075.3L1088.7 562.3H1347.8V550.3H1088.7L1075.3 548.3H776L749.3 521.7V487.7"/>
<path d="M1075.3 548.3V565M1088.7 550.3V562.3"/>
<path d="M797 431.7H1075.3L1088.7 433.3H1347.8V445.7H1088.7L1075.3 447.3H831.6V431.7M831.6 447.3L797 476.7M1075.3 431.7V447.3M1088.7 433.3V445.7"/>
<!-- lower -->
<path d="M480.5 707.3H652.4L675.4 710.3H934.2L951.2 715.7H1215.6L1228 717.3H1347.4V729.3H1228L1215.6 731H951.2L934.2 735.3H675.4L652.4 738.7H480.5V707.3M652.4 707.3V738.7M675.4 710.3V735.3M934.2 710.3V735.3M951.2 715.7V731M1215.6 715.7V731M1228 717.3V729.3"/>
<path d="M480.5 707.3C458 709 441 724 441 746.7V761M480.5 738.7C475 739 473 743 472.9 747V761"/>
<rect x="439.2" y="761" width="35.2" height="66.7"/>
<rect x="524.2" y="767.3" width="41.3" height="54.4"/>
<path d="M520.4 773.3H524.2M520.4 815H524.2"/>
<path d="M481.3 833.3H529.5M481.3 846.7H529.5M481.3 833.3V846.7M529.5 824.3V855.3H652.4L675.4 852.3H934.2L951.2 847.3H1215.6L1228 846H1347.4V833.3H1228L1215.6 832.3H951.2L934.2 827.7H675.4L652.4 824.3H529.5M652.4 824.3V855.3M675.4 827.7V852.3M934.2 827.7V852.3M951.2 832.3V847.3M1215.6 832.3V847.3M1228 833.3V846"/>
</g>
<!-- grilles -->
<g fill="url(#gm)">
<rect x="896.6" y="435" width="33.7" height="10"/><rect x="1039" y="435" width="33" height="10"/><rect x="1178" y="435" width="33" height="10"/><rect x="1310.6" y="435" width="34" height="10"/>
<rect x="896.6" y="551" width="33.7" height="10"/><rect x="1039" y="551" width="33" height="10"/><rect x="1178" y="551" width="33" height="10"/><rect x="1310.6" y="551" width="34" height="10"/>
<rect x="482.9" y="719" width="33.6" height="10"/><rect x="616" y="719" width="33.3" height="10"/><rect x="759.7" y="718" width="33.5" height="10"/><rect x="897" y="718" width="33.5" height="10"/><rect x="1038.8" y="718" width="33.1" height="10"/><rect x="1177.5" y="718" width="33.5" height="10"/><rect x="1310.6" y="718" width="33.6" height="10"/>
<rect x="482.9" y="835" width="33.6" height="10"/><rect x="616" y="835" width="33.3" height="10"/><rect x="759.7" y="835" width="33.5" height="10"/><rect x="897" y="835" width="33.5" height="10"/><rect x="1038.8" y="835" width="33.1" height="10"/><rect x="1177.5" y="835" width="33.5" height="10"/><rect x="1310.6" y="835" width="33.6" height="10"/>
</g>
<!-- AHU -->
<rect x="759" y="424" width="7.5" height="60" fill="url(#gh)"/>
<rect x="474.4" y="764" width="7" height="61" fill="url(#gh)"/>
<rect x="766.5" y="414" width="30.5" height="80" fill="none" stroke="#f020f0" stroke-width="1.6"/>
<rect x="768.5" y="416" width="26.5" height="76" fill="none" stroke="#f020f0" stroke-width="1.2"/>
<path d="M768.5 416L795 492M795 416L768.5 492" stroke="#a838b0" stroke-width="1"/>
<rect x="481.8" y="762" width="38.2" height="65" fill="none" stroke="#f020f0" stroke-width="3"/>
<path d="M483 763L519 826M519 763L483 826" stroke="#a838b0" stroke-width="1"/>
<!-- red, blue -->
<rect x="745.5" y="352.3" width="61.2" height="22.7" fill="none" stroke="#d81818" stroke-width="1.3"/>
<path d="M745.5 352.3L806.7 374" stroke="#d81818" stroke-width="1.2"/>
<path d="M806.7 372.5H833.5V410H780.7V415" fill="none" stroke="#0a0adc" stroke-width="3"/>
<path d="M501.2 761.7V747.7H431.6V893.3H404.4V940.7H351.2" fill="none" stroke="#0a0adc" stroke-width="3"/>
<path d="M441 747.7H473" stroke="#1e70e8" stroke-width="2"/>
<rect x="318.3" y="934.3" width="32.5" height="61.4" fill="none" stroke="#d81818" stroke-width="1.3"/>
<use href="#fan" x="334.4" y="951"/><use href="#fan" x="334.4" y="977.7"/>
<!-- info boxes -->
<g class="wh">
<rect x="588.6" y="171.3" width="127" height="93"/><path d="M588.6 195H715.6M588.6 218.3H715.6M588.6 241.3H715.6M715.6 194.3H765.4V352"/>
<rect x="143.4" y="947.3" width="127" height="94.4"/><path d="M143.4 971.7H270.5M143.4 994.3H270.5M143.4 1017.3H270.5M270.5 970.7H318"/>
<path class="th" d="M900.6 728.3L911.2 765.7H978.7M800 792.3H859.3L897.4 845"/>
</g>
<text class="cad" x="596" y="191" textLength="85" lengthAdjust="spacingAndGlyphs">HGYR-13F(S)</text>
<text class="cad" x="599" y="214" textLength="89" lengthAdjust="spacingAndGlyphs">N=4.93KWX1台</text>
<text x="599" y="236" textLength="56.6" lengthAdjust="spacingAndGlyphs" style="fill:#fff;font-size:12px;font-weight:700">单台制冷量</text>
<text class="cad" x="655.6" y="238" textLength="69" lengthAdjust="spacingAndGlyphs">?12.7Kw</text>
<text x="600" y="259" textLength="65" lengthAdjust="spacingAndGlyphs" style="fill:#fff;font-size:12px;font-weight:700">置于屋顶平面</text>
<text class="cad" x="150" y="968" textLength="85" lengthAdjust="spacingAndGlyphs">HGYR-28F(S)</text>
<text class="cad" x="153.7" y="990" textLength="90" lengthAdjust="spacingAndGlyphs">N=10.1KWX1台</text>
<text x="153.7" y="1012" textLength="54.8" lengthAdjust="spacingAndGlyphs" style="fill:#fff;font-size:12px;font-weight:700">单台制冷量</text>
<text class="cad" x="208.5" y="1014" textLength="69.5" lengthAdjust="spacingAndGlyphs">?26.9Kw</text>
<text x="153.7" y="1035" textLength="66.3" lengthAdjust="spacingAndGlyphs" style="fill:#fff;font-size:12px;font-weight:700">置于屋顶平面</text>
<!-- labels -->
<g class="lab">
<text x="812.5" y="366" textLength="63" lengthAdjust="spacingAndGlyphs" style="font-size:14px;font-weight:400">DN(19.5,12.7)</text>
<text x="799" y="427" textLength="34.5" lengthAdjust="spacingAndGlyphs">冷媒管</text>
<text x="759.6" y="511" textLength="70.8" lengthAdjust="spacingAndGlyphs" style="font-weight:400">HGNR-13F(S)D</text>
<text x="770.4" y="539.5" textLength="33.2" lengthAdjust="spacingAndGlyphs" style="font-weight:400">卫生间</text>
<text x="896" y="476" textLength="34" lengthAdjust="spacingAndGlyphs">天平室</text>
<text x="881" y="499" textLength="70" lengthAdjust="spacingAndGlyphs">风量:360m³/h</text>
<text x="1039" y="476" textLength="24" lengthAdjust="spacingAndGlyphs">液相</text>
<text x="1020.5" y="499" textLength="70" lengthAdjust="spacingAndGlyphs">风量:613m³/h</text>
<text x="1173" y="476" textLength="24" lengthAdjust="spacingAndGlyphs">液相</text>
<text x="1152.6" y="499" textLength="70" lengthAdjust="spacingAndGlyphs">风量:613m³/h</text>
<text x="1313" y="476" textLength="12" lengthAdjust="spacingAndGlyphs">GC</text>
<text x="1293" y="499" textLength="70" lengthAdjust="spacingAndGlyphs">风量:613m³/h</text>
<text x="507.7" y="757.5" textLength="70" lengthAdjust="spacingAndGlyphs" style="font-weight:400">HGNR-28F(S)D</text>
<text x="608" y="773" textLength="41" lengthAdjust="spacingAndGlyphs" style="font-weight:400">办公室2</text>
<text x="596" y="796" textLength="70" lengthAdjust="spacingAndGlyphs">风量:765m³/h</text>
<text x="475.6" y="874" textLength="40" lengthAdjust="spacingAndGlyphs" style="font-weight:400">办公室1</text>
<text x="463.7" y="896" textLength="69.5" lengthAdjust="spacingAndGlyphs">风量:765m³/h</text>
<text x="761" y="794" textLength="13" lengthAdjust="spacingAndGlyphs">UV</text>
<text x="741.3" y="816" textLength="70" lengthAdjust="spacingAndGlyphs">风量:626m³/h</text>
<text x="897" y="794" textLength="18" lengthAdjust="spacingAndGlyphs">TLG</text>
<text x="876.8" y="816" textLength="69" lengthAdjust="spacingAndGlyphs">风量:626m³/h</text>
<text x="1038.8" y="794" textLength="34" lengthAdjust="spacingAndGlyphs">化学室</text>
<text x="1016.8" y="816" textLength="70" lengthAdjust="spacingAndGlyphs">风量:626m³/h</text>
<text x="1238" y="794" textLength="30" lengthAdjust="spacingAndGlyphs">30KVA</text>
<text x="1214" y="816" textLength="77" lengthAdjust="spacingAndGlyphs">风量:1391m³/h</text>
<text x="913.5" y="761" textLength="69" lengthAdjust="spacingAndGlyphs">单层百叶回风口</text>
<text x="794" y="787.5" textLength="70" lengthAdjust="spacingAndGlyphs">双层百叶送风口</text>
<text x="348" y="930" textLength="49" lengthAdjust="spacingAndGlyphs" style="font-size:14px;font-weight:400">DN(25,16)</text>
<text x="434" y="851" textLength="19" lengthAdjust="spacingAndGlyphs" style="font-size:11px">连接室</text>
<text x="434" y="862" textLength="19" lengthAdjust="spacingAndGlyphs" style="font-size:11px">内外机</text>
<text x="434" y="874" textLength="19" lengthAdjust="spacingAndGlyphs" style="font-size:11px">冷媒管</text>
</g>
<!-- drawing title -->
<text x="864" y="1136" textLength="270" style="fill:#e6e6e6;font-size:30px;stroke:#212830;stroke-width:.4;font-family:'WenQuanYi Zen Hei','Noto Sans CJK SC',sans-serif">六层空调系统平面图</text>
<path d="M862 1150H1074" stroke="#fff" stroke-width="1.8"/><path d="M856 1156H1074" stroke="#fff" stroke-width="1"/>
<!-- title block -->
<path d="M1373.6 1184.5H1695M1373.6 1208.5H1695M1373.6 1184V1236M1612.4 1184V1236" stroke="#f0b40a" stroke-width="2.4" fill="none"/>
<path d="M1373.6 1219.3H1494M1373.6 1231.7H1494M1612.4 1219.3H1695M1612.4 1231.7H1695M1414 1208V1236M1443 1208V1236M1494 1208V1236M1642.7 1208V1236" stroke="#f0b40a" stroke-width="1.4" fill="none"/>
<g style="fill:#f2f2f2;font-size:8px;font-weight:700" font-family="Noto Sans CJK SC">
<text x="1381" y="1218">设 计</text><text x="1418" y="1218">审 定 审</text><text x="1381" y="1230">制 图</text><text x="1418" y="1230">审 定 审</text>
<text x="1614" y="1218">设计阶段</text><text x="1614" y="1229">设计专业</text><text x="1672" y="1229">方 案 图</text>
<text x="1524" y="1236">六层空调系统平面图</text></g>

<!-- compass -->
<circle cx="1612.3" cy="215" r="53.5" fill="none" stroke="#3d4149" stroke-width="13"/>
<rect x="1586.7" y="189.3" width="51.6" height="51.4" fill="#a6a6a6"/>
<rect x="1596.5" y="199" width="31.5" height="31" fill="#989898"/>
<text x="1612" y="224" text-anchor="middle" style="fill:#555;font-size:24px;stroke:#989898;stroke-width:.4">上</text>
<g style="fill:#9a9a9a;font-size:20px" text-anchor="middle"><text x="1612" y="168">北</text><text x="1612" y="281">南</text><text x="1555" y="223">西</text><text x="1668" y="223">东</text></g>
<rect x="1589" y="302" width="47.7" height="17" rx="4" fill="#8a8d96"/>
<text x="1593" y="315" style="fill:#5c5f66;font-size:11.5px">WCS</text>
<path d="M1627.3 133V330" stroke="#f0f0f0" stroke-width="1.1"/>

<!-- left toolbar -->
<rect x="4" y="134" width="24" height="446" fill="#38414f" stroke="#2a313c"/>
<path d="M8 137.5H23" stroke="#c9ccd1" stroke-dasharray="1 1.2" stroke-width="2"/>
<g class="st">
<path d="M9 160L23 146" stroke-dasharray="4 1.5"/><path d="M9 182L23 168M9 182H13M9 182V178M23 168H19M23 168V172"/>
<path d="M9 201H15C24 201 24 192 18 192" stroke-dasharray="3 1.5"/>
<path d="M16 210L23 216L20 224H12L9 216Z"/>
<rect x="9" y="235" width="14" height="11"/>
<path d="M10 272Q12 258 24 256" stroke-dasharray="3 2"/>
<circle cx="16" cy="285" r="7.5"/><path d="M16 285L20 281" stroke="#7db9e8"/>
<path d="M10 303Q13 299 17 302Q23 300 24 306Q25 312 19 312Q14 315 11 311Q7 308 10 303Z"/>
<path d="M9 336L14 324L19 332L24 322" stroke-dasharray="3 1.5"/>
<ellipse cx="16" cy="351" rx="7.5" ry="5" stroke-dasharray="4 2"/>
<path d="M23 372A7 6 0 1 0 15 378V380" stroke-dasharray="3 2"/>
<rect x="9" y="391" width="9" height="7"/><circle cx="18" cy="398" r="3.6"/>
<rect x="9" y="413" width="9" height="7"/><circle cx="18" cy="421" r="3.6"/>
<path d="M9 455H24M9 469H24M12 452V472M21 452V472"/><path d="M9 476H24M9 490H24M12 473V493M21 473V493"/>
</g>
<path d="M15 386H24V400H18V395H15Z" fill="#6fb8ee"/><circle cx="20" cy="410" r="3.5" fill="#f3c04a"/>
<g fill="#c9ccd1"><circle cx="16" cy="433" r="1"/><circle cx="10" cy="440" r="1"/><circle cx="22" cy="440" r="1"/><circle cx="16" cy="447" r="1"/></g>
<rect x="12" y="456" width="9" height="12" fill="#6a8fb0"/><rect x="12" y="477" width="9" height="12" fill="#7a99b8"/>
<path d="M8 498H18L24 505V512H8Z" fill="#dfe3e7"/><circle cx="15" cy="505" r="2.4" fill="#2a313c"/>
<g class="st"><rect x="8" y="520" width="16" height="13"/><path d="M8 524.5H24M8 529H24M13 520V533M18 520V533"/></g>
<text x="16" y="556" text-anchor="middle" style="fill:#c9ccd1;font-size:20px">A</text>
<circle cx="11.5" cy="566" r="3.5" fill="#5fd06a"/><circle cx="20.5" cy="575" r="3.5" fill="#7db9e8"/><path d="M16 566H21V570" stroke="#fff" fill="none"/>

<!-- right toolbar -->
<rect x="1699" y="133" width="24" height="404" fill="#38414f" stroke="#2a313c"/>
<path d="M1703 137.5H1717" stroke="#c9ccd1" stroke-dasharray="1 1.2" stroke-width="2"/>
<path d="M1706 157L1717 146L1720 149L1710 160Z" fill="#f0c97a"/><circle cx="1708" cy="158" r="2" fill="#e0605a"/><path d="M1703 161H1719" stroke="#c9ccd1"/>
<g class="st">
<rect x="1703" y="168" width="8" height="5" rx="2.5"/><path d="M1713 170H1718V174"/>
<path class="sb" d="M1706 180A3 3 0 1 0 1714 180A3 3 0 1 0 1706 180M1714 180A3 3 0 1 0 1720 180A3 3 0 1 0 1714 180"/>
<path d="M1703 204L1709 191V204ZM1718 204L1712 191V204Z"/>
<path class="sb" d="M1719 213H1709A6 6 0 0 0 1709 225H1719M1719 217H1710A2 2 0 0 0 1710 221H1719"/>
<rect x="1704" y="234" width="6" height="6"/><rect class="sb" x="1712" y="234" width="6" height="6"/><rect class="sb" x="1704" y="243" width="6" height="6"/><rect class="sb" x="1712" y="243" width="6" height="6"/>
<path d="M1711 256V270M1704 263H1718" stroke-width="2"/>
<path d="M1718 286A7.5 7.5 0 1 1 1712 279" stroke-width="1.5"/>
<rect class="sb" x="1703" y="299" width="16" height="16"/><rect x="1703" y="306" width="9" height="9"/>
<path d="M1703 322H1711L1719 336H1703Z" class="sb"/><path d="M1703 322V336H1712M1706 332H1713"/>
<path d="M1703 345H1719" stroke-dasharray="2 2"/><path d="M1705 345L1716 357M1717 345L1706 357"/>
<circle cx="1708" cy="359" r="2.5"/><circle cx="1714" cy="359" r="2.5"/>
<path d="M1703 375H1713M1717 368V379" /><path d="M1703 378H1715" stroke-dasharray="2 2"/>
<path d="M1703 389H1719V400H1703Z M1713 386V391" />
<path d="M1703 411H1719V422H1703Z M1709 408V414" />
<path class="sb" d="M1703 439H1719"/>
<path d="M1703 470L1713 456H1719M1703 464V470" />
<path d="M1703 493V486Q1704 477 1712 476H1719"/>
<path d="M1703 518Q1703 500 1711 505T1719 498M1703 522Q1715 522 1719 512"/>
<path class="sb" d="M1703 522H1716V534H1703ZM1703 522L1707 519H1719V530L1716 534"/>
</g>

<!-- command -->
<rect x="2" y="1236" width="1728" height="3" fill="#4a5260"/>
<rect x="2" y="1239" width="27" height="55" fill="#3b4453"/>
<rect x="29" y="1239" width="1702" height="29" fill="#c8c8c8"/>
<rect x="29" y="1268" width="1702" height="1" fill="#222"/>
<rect x="29" y="1269" width="1697" height="24" fill="#fff"/>
<text x="31.5" y="1263.5" textLength="373" style="fill:#222;font-size:18px;font-family:'Liberation Mono','Noto Sans CJK SC',monospace">选择注释对象或 [放弃(U)/模式(M)]: *取消*</text>
<path d="M9 1245H25" stroke="#dfe3e7" stroke-dasharray="1 1.2" stroke-width="2.4"/>
<path d="M10 1255L19 1264M19 1255L10 1264" stroke="#e8e8e8" stroke-width="2"/>
<path d="M10 1290L17 1282C16 1278 20 1276 24 1277L21 1280L23 1282L26 1280C26 1284 23 1286 19 1285L12 1292Z" fill="#e8e8e8"/>
<rect x="33" y="1276" width="16" height="11" fill="#dfe3e7" stroke="#444"/><rect x="33" y="1276" width="16" height="2.5" fill="#555"/><path d="M36 1281L38 1283L36 1285M40 1285H44" stroke="#222" fill="none"/>
<path d="M52 1280H58L55 1283Z" fill="#555"/>
<text x="68" y="1287" style="fill:#999;font-size:18px;font-style:italic">键入命令</text>

<!-- layout tabs -->
<path d="M19 1295H58L52 1312H25Z" fill="#3b4453"/>
<text x="27" y="1309" textLength="24" style="fill:#fff;font-size:12px;font-weight:700">模型</text>
<path d="M60 1295H132L127 1312H66Z" fill="#2f3744"/>
<text x="74.6" y="1309" textLength="43.5" style="fill:#b0b6bf;font-size:12.5px">Layout1</text>
<path d="M134 1295H200L194 1312H139Z" fill="#2f3744"/>
<text x="142" y="1309" textLength="45" style="fill:#b0b6bf;font-size:12.5px">Layout2</text>
<path d="M206 1295H222L218 1312H204Z" fill="#2f3744"/>
<path d="M209 1303.5H219M214 1299V1308" stroke="#b0b6bf" stroke-width="2"/>

<!-- status bar -->
<g fill="#3b4453">
<rect x="1152" y="1296" width="29" height="24"/><rect x="1184.6" y="1296" width="63" height="24"/><rect x="1251.5" y="1296" width="101.5" height="24"/><rect x="1356" y="1296" width="62" height="24"/><rect x="1421" y="1296" width="24" height="24"/><rect x="1448.6" y="1296" width="105.4" height="24"/><rect x="1557" y="1296" width="65" height="24"/><rect x="1625.5" y="1296" width="24" height="24"/><rect x="1652" y="1296" width="21.7" height="24"/><rect x="1677" y="1296" width="49" height="24"/>
</g>
<rect x="1381" y="1296" width="22.5" height="24" fill="#4d7fb0"/><rect x="1448.6" y="1296" width="22.4" height="24" fill="#4d7fb0"/>
<text x="1154" y="1313" textLength="25" style="fill:#dfe3e7;font-size:12.5px">模型</text>
<path d="M1188 1303H1202M1188 1309H1202M1192 1299V1314M1198 1299V1314" stroke="#c9ccd1"/>
<g fill="#c9ccd1"><circle cx="1215" cy="1302" r="1"/><circle cx="1220" cy="1302" r="1"/><circle cx="1225" cy="1302" r="1"/><circle cx="1215" cy="1307" r="1"/><circle cx="1220" cy="1307" r="1"/><circle cx="1225" cy="1307" r="1"/><circle cx="1215" cy="1312" r="1"/><circle cx="1220" cy="1312" r="1"/><circle cx="1225" cy="1312" r="1"/></g>
<use href="#dd" x="1240" y="1308"/>
<path d="M1256 1299V1315H1271M1256 1309H1263V1315" class="st"/>
<circle class="st" cx="1285" cy="1308" r="6"/><path d="M1285 1308L1293 1300M1285 1308H1293" class="st"/>
<use href="#dd" x="1306" y="1308"/>
<path d="M1321 1300L1334 1316" stroke="#e04a4a"/><path d="M1326 1300L1327 1316" stroke="#3fbf5a"/><circle cx="1326.5" cy="1308" r="1.8" fill="#dfe3e7"/>
<use href="#dd" x="1347" y="1308"/>
<path d="M1361 1316L1374 1303M1361 1316H1376" class="st"/>
<path d="M1386 1300H1398V1315H1386ZM1386 1300V1306" fill="none" stroke="#fff" stroke-width="1.4"/><rect x="1384" y="1298" width="4" height="4" fill="#fff"/>
<use href="#dd" x="1412" y="1308"/>
<path d="M1425 1301H1441M1425 1306H1436M1425 1311H1433" stroke="#c9ccd1" stroke-width="2.2"/><path d="M1425 1315H1441" stroke="#c9ccd1"/>
<path d="M1451 1318L1458 1300H1461L1468 1318L1460 1312Z" fill="#fff"/><circle cx="1466" cy="1301" r="2.4" fill="none" stroke="#fff"/>
<path d="M1476 1318L1483 1300H1486L1493 1318L1485 1312Z" fill="#c9ccd1"/><path d="M1490 1299L1492 1303L1488 1305" stroke="#c9ccd1" fill="none"/>
<path d="M1500 1318L1507 1300H1510L1517 1318L1509 1312Z" fill="#c9ccd1"/>
<text x="1525" y="1312" style="fill:#c9ccd1;font-size:12.5px">1:1</text><use href="#dd" x="1546" y="1308"/>
<circle cx="1566" cy="1308" r="5" fill="none" stroke="#c9ccd1" stroke-width="3.5"/><path d="M1566 1299V1303M1566 1313V1317M1557 1308H1561M1571 1308H1575M1560 1302L1562 1304M1570 1312L1572 1314M1572 1302L1570 1304M1562 1312L1560 1314" stroke="#c9ccd1" stroke-width="2.4"/>
<use href="#dd" x="1590" y="1308"/>
<path d="M1603 1308H1621M1612 1299V1317" stroke="#c9ccd1" stroke-width="1.8"/>
<g class="st"><rect x="1630" y="1299" width="7" height="7"/><circle cx="1643" cy="1303" r="3"/><path d="M1637 1311L1641 1317H1633Z"/></g>
<path d="M1663 1299V1304M1656 1303H1670" stroke="#7db9e8"/><rect x="1656" y="1308" width="8" height="8" fill="#f3c04a"/><rect x="1660" y="1304" width="7" height="6" fill="#6fb8ee"/><path d="M1664 1313L1667 1316L1672 1309" stroke="#5fd06a" stroke-width="2" fill="none"/>
<rect x="1681" y="1301" width="15" height="14" class="st"/><path d="M1684 1312L1688 1308M1689 1304L1693 1304M1693 1304V1308" class="st"/>
<path d="M1705 1301H1721M1705 1308H1721M1705 1315H1721" stroke="#c9ccd1" stroke-width="2"/>
</svg>
</body></html>
